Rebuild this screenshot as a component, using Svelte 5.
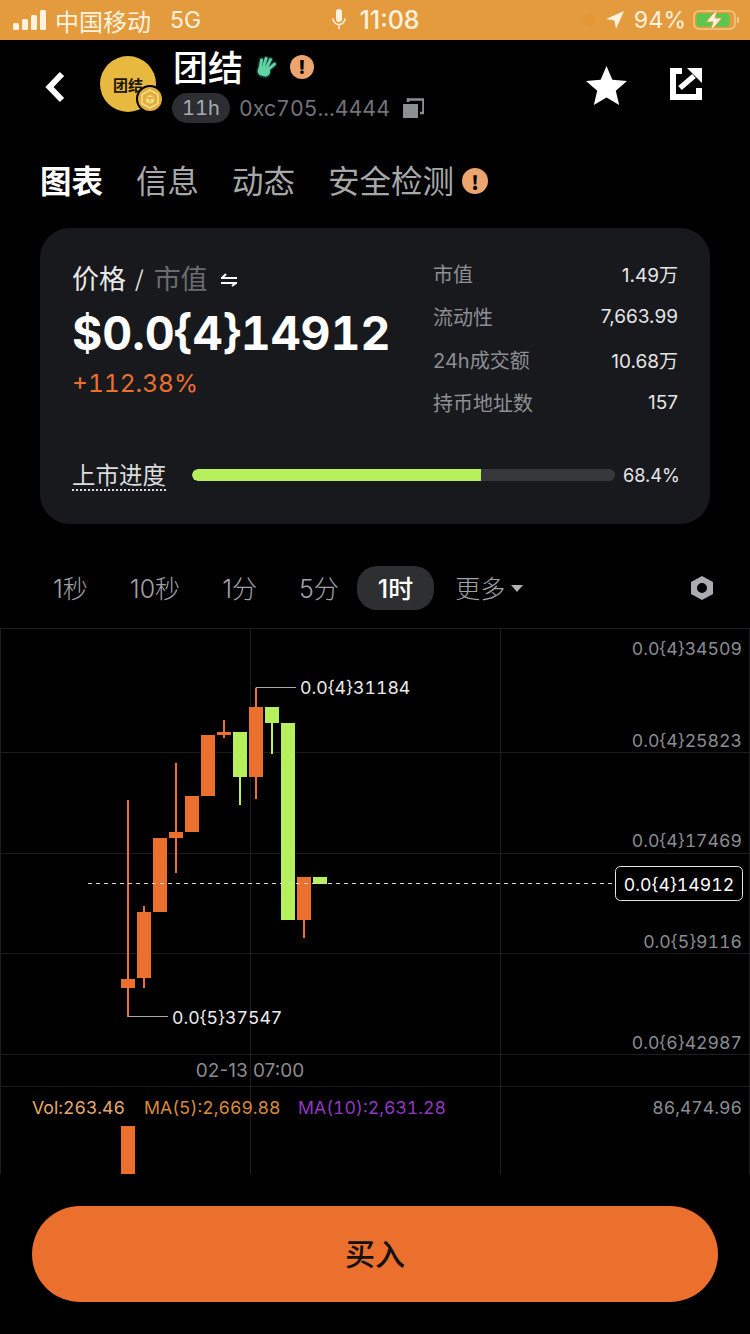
<script>
  const tabs = ['图表', '信息', '动态', '安全检测'];
  const stats = [['市值', '1.49万'], ['流动性', '7,663.99'], ['24h成交额', '10.68万'], ['持币地址数', '157']];
  const frames = ['1秒', '10秒', '1分', '5分', '1时'];
  const OR = '#eb702e';
  const GR = '#b6f05c';
  const candles = [
    { x: 121, t: 979, b: 988, w1: 800, w2: 1017, c: OR },
    { x: 137, t: 912, b: 978, w1: 906, w2: 988, c: OR },
    { x: 153, t: 838, b: 912, w1: 838, w2: 912, c: OR },
    { x: 169, t: 832, b: 838, w1: 763, w2: 873, c: OR },
    { x: 185, t: 796, b: 832, w1: 796, w2: 832, c: OR },
    { x: 201, t: 735, b: 796, w1: 735, w2: 796, c: OR },
    { x: 217, t: 732, b: 735, w1: 720, w2: 738, c: OR },
    { x: 233, t: 732, b: 777, w1: 732, w2: 805, c: GR },
    { x: 249, t: 707, b: 777, w1: 688, w2: 799, c: OR },
    { x: 265, t: 707, b: 723, w1: 707, w2: 754, c: GR },
    { x: 281, t: 723, b: 920, w1: 723, w2: 920, c: GR },
    { x: 297, t: 877, b: 920, w1: 877, w2: 938, c: OR },
    { x: 313, t: 877, b: 884, w1: 877, w2: 884, c: GR }
  ];
  const axis = [
    ['0.0{4}34509', 655], ['0.0{4}25823', 747], ['0.0{4}17469', 847], ['0.0{5}9116', 948], ['0.0{6}42987', 1049]
  ];
  const origin = 628;
</script>

<div class="page">
  <div class="status">
    <div class="st-left">
      <svg class="signal" width="34" height="20" viewBox="0 0 34 20"><rect x="0" y="13" width="6" height="7" rx="1.5"/><rect x="9" y="9" width="6" height="11" rx="1.5"/><rect x="18" y="5" width="6" height="15" rx="1.5"/><rect x="27" y="0" width="6" height="20" rx="1.5"/></svg>
      <span class="carrier">中国移动</span>
      <span class="net">5G</span>
    </div>
    <div class="st-mid">
      <svg width="14" height="22" viewBox="0 0 14 22"><rect x="4" y="0" width="6" height="13" rx="3" fill="#fff3df"/><path d="M1 9.500a6 6 0 0 0 12 0M7 16v4" fill="none" stroke="#fff3df" stroke-width="1.600"/></svg>
      <span class="time">11:08</span>
    </div>
    <div class="st-right">
      <span class="dot"></span>
      <svg width="18" height="18" viewBox="0 0 18 18"><path d="M18 0 0 8l8.500 1.500L10 18z" fill="#fff3df"/></svg>
      <span class="pct">94%</span>
      <svg width="46" height="24" viewBox="0 0 46 24">
        <rect x="1" y="3" width="41" height="18" rx="5" fill="none" stroke="#f3c98c" stroke-width="1.500"/>
        <rect x="3.500" y="5.500" width="33" height="13" rx="2.500" fill="#57c84d"/>
        <rect x="44" y="9" width="2" height="6" rx="1" fill="#f3c98c"/>
        <path d="M25 0 13 14h7l-3 10 12-14h-7z" fill="#fff3df" stroke="#e39b3e" stroke-width="1"/>
      </svg>
    </div>
  </div>

  <header class="head">
    <svg class="back" width="24" height="32" viewBox="0 0 24 32"><path d="M18 3 5.500 16 18 29" fill="none" stroke="#fff" stroke-width="6"/></svg>
    <div class="avatar">
      <span class="av-text">团结</span>
      <span class="av-badge">
        <svg width="22" height="22" viewBox="0 0 22 22"><path d="M11 2 19 6.500V15.500L11 20 3 15.500V6.500Z" fill="none" stroke="#f6dc8a" stroke-width="1.600"/><path d="M11 6.500l4.500 2.500v5L11 16.500 6.500 14V9ZM6.500 9 11 11.500 15.500 9M11 11.500v5" fill="#f6dc8a" stroke="#e0ae3a" stroke-width=".8"/></svg>
      </span>
    </div>
    <div class="title-col">
      <div class="title-row">
        <span class="title">团结</span>
        <svg class="hand" width="22" height="24" viewBox="0 0 22 24">
          <g transform="rotate(14 10 14)">
            <g stroke="#16352f" stroke-width="5.500" stroke-linecap="round" fill="none">
              <path d="M5 14 4.500 6M8 13 8.500 3.500M11 13 13 3.500M13 14 18 7"/>
              <path d="M8 17l3 0" stroke-width="12"/>
            </g>
            <g stroke="#5fd3a3" stroke-width="3" stroke-linecap="round" fill="none">
              <path d="M5 14 4.500 6M8 13 8.500 3.500M11 13 13 3.500M13 14 18 7"/>
              <path d="M8 16.500l3 0" stroke-width="9.500"/>
            </g>
          </g>
        </svg>
        <span class="warn big">!</span>
      </div>
      <div class="sub-row">
        <span class="age">11h</span>
        <span class="addr">0xc705...4444</span>
        <svg width="22" height="20" viewBox="0 0 22 20"><rect x="1" y="6" width="15" height="14" fill="#8c8f93"/><path d="M6 3V0.500h15.500V14H18" fill="none" stroke="#8c8f93" stroke-width="2.600" transform="translate(0 1)"/></svg>
      </div>
    </div>
    <div class="actions">
      <svg width="43" height="41" viewBox="0 0 44 42"><path d="M22 1l6 14 15 1.300-11.500 10L35 41 22 33.300 9 41l3.500-14.700L1 16.300 16 15z" fill="#fff"/></svg>
      <svg class="share" width="32" height="32" viewBox="0 0 32 32"><path d="M12 3H3v26h26v-9" fill="none" stroke="#fff" stroke-width="6"/><path d="M10 20 24 8" stroke="#fff" stroke-width="5.500" fill="none"/><path d="M17 0h15v15z" fill="#fff"/></svg>
    </div>
  </header>

  <nav class="tabs">
    {#each tabs as t, i}
      <span class="tab" class:on={i === 0}>{t}</span>
    {/each}
    <span class="warn tabwarn">!</span>
  </nav>

  <section class="card">
    <div class="card-top">
      <div class="price-col">
        <div class="switch">
          <span>价格</span><span class="slash">/</span><span class="dim">市值</span>
          <svg width="18" height="14" viewBox="0 0 18 14"><path d="M1 5h16M6 1 2 5M1 10h16M12 13l4-3" fill="none" stroke="#fff" stroke-width="2"/></svg>
        </div>
        <div class="price">$0.0&#123;4&#125;14912</div>
        <div class="change">+112.38%</div>
      </div>
      <dl class="stats">
        {#each stats as s}
          <div class="stat"><dt>{s[0]}</dt><dd>{s[1]}</dd></div>
        {/each}
      </dl>
    </div>
    <div class="progress">
      <span class="plabel">上市进度</span>
      <div class="track"><div class="fill" style="width:{68.4}%"></div></div>
      <span class="pval">68.4%</span>
    </div>
  </section>

  <div class="frames">
    {#each frames as f, i}
      <span class="frame" class:act={i === 4}>{f}</span>
    {/each}
    <span class="more">更多<i class="caret"></i></span>
    <svg class="gear" width="24" height="26" viewBox="0 0 24 26"><path fill-rule="evenodd" d="M12 1 23 7v12l-11 6L1 19V7zM12 8a5 5 0 1 0 0 10 5 5 0 0 0 0-10z" fill="#a9adb1"/></svg>
  </div>

  <svg class="chart" width="750" height="546" viewBox="0 {origin} 750 546">
    <g stroke="#1c1d1f" stroke-width="1">
      <path d="M0 628.500H750M0 752.500H750M0 853.500H750M0 953.500H750M0 1054.500H750M0 1086.500H750"/>
      <path d="M.5 628V1174M250.500 628V1174M500.500 628V1174M749.500 628V1174"/>
    </g>
    {#each candles as k}
      <rect x={k.x + 6} y={k.w1} width="2" height={k.w2 - k.w1} fill={k.c}/>
      <rect x={k.x} y={k.t} width="14" height={k.b - k.t} fill={k.c}/>
    {/each}
    <path d="M88 883.500H612" stroke="#d8d8d8" stroke-width="1" stroke-dasharray="4 4"/>
    <path d="M256 688V687.500H296M128 1016.500H168" stroke="#a8a8a8" stroke-width="1" fill="none"/>
    <text class="mark" x="300" y="694">0.0&#123;4&#125;31184</text>
    <text class="mark" x="172" y="1024">0.0&#123;5&#125;37547</text>
    {#each axis as a}
      <text class="axis" x="742" y={a[1]} text-anchor="end">{a[0]}</text>
    {/each}
    <rect x="615.500" y="866.500" width="127" height="34" rx="5" fill="#000" stroke="#e6e6e6"/>
    <text class="cur" x="679" y="891" text-anchor="middle">0.0&#123;4&#125;14912</text>
    <text class="date" x="250" y="1077" text-anchor="middle">02-13 07:00</text>
    <text class="vol" x="32" y="1114" fill="#e2aa72">Vol:263.46</text>
    <text class="vol" x="144" y="1114" fill="#d98a3d">MA(5):2,669.88</text>
    <text class="vol" x="298" y="1114" fill="#9237c4">MA(10):2,631.28</text>
    <text class="axis" x="742" y="1114" text-anchor="end">86,474.96</text>
    <rect x="121" y="1126" width="14" height="48" fill={OR}/>
  </svg>

  <button class="buy">买入</button>
</div>

<style>
  :global(body) { margin: 0; background: #000; }
  .page {
    width: 750px; height: 1334px; background: #000; overflow: hidden; color: #fff;
    display: flex; flex-direction: column;
    font-family: Inter, "Noto Sans CJK SC", sans-serif;
  }
  .status {
    height: 40px; flex: none; background: #e39b3e; color: #fff3df;
    display: grid; grid-template-columns: 1fr auto 1fr; align-items: center; padding: 0 11px 0 13px;
    font-family: "Noto Sans CJK SC", sans-serif; font-size: 24px;
  }
  .st-left { display: flex; align-items: center; }
  .signal { fill: #fff3df; margin-right: 8px; }
  .net { margin-left: 19px; font-family: Inter, sans-serif; font-size: 23px; }
  .st-mid { display: flex; align-items: center; gap: 13px; }
  .time { font-family: Inter, sans-serif; font-size: 25px; font-weight: 500; }
  .st-right { display: flex; align-items: center; justify-content: flex-end; gap: 7px; }
  .dot { width: 12px; height: 12px; border-radius: 50%; background: #e59633; margin-right: 4px; }
  .pct { font-family: Inter, sans-serif; font-size: 23px; margin-left: 3px; font-variant-numeric: tabular-nums; }

  .head { height: 94px; flex: none; display: flex; padding-left: 44px; padding-right: 48px; }
  .back { margin-top: 31px; }
  .avatar {
    width: 56px; height: 56px; border-radius: 50%; background: #e8b93f; margin: 16px 0 0 32px;
    position: relative; display: flex; align-items: center; justify-content: center; flex: none;
  }
  .av-text { color: #1c1608; font-size: 15px; font-weight: 700; font-family: "Noto Sans CJK SC", sans-serif; }
  .av-badge {
    position: absolute; right: -8px; bottom: -1px; width: 24px; height: 24px; border-radius: 50%;
    background: #e0ae3a; border: 2px solid #000; display: flex; align-items: center; justify-content: center;
  }
  .title-col { margin-left: 17px; display: flex; flex-direction: column; }
  .title-row { display: flex; align-items: center; height: 56px; margin-top: -2px; margin-bottom: 2px; }
  .title { font-family: "Noto Sans CJK SC", sans-serif; font-size: 35px; line-height: 50px; font-weight: 500; width: 70px; }
  .hand { margin-left: 12px; margin-top: 2px; }
  .warn {
    width: 24px; height: 24px; border-radius: 50%; background: #eda56f; color: #000; font-weight: 800;
    font-size: 19px; display: inline-flex; align-items: center; justify-content: center; line-height: 1;
  }
  .big { margin-left: 13px; margin-top: 2px; }
  .sub-row { display: flex; align-items: center; margin-top: -3px; margin-left: -1px; }
  .age {
    background: #2c2e31; color: #a8abae; font-size: 20px; height: 30px; width: 58px; border-radius: 15px;
    display: flex; align-items: center; justify-content: center; font-variant-numeric: tabular-nums;
  }
  .addr { color: #717478; font-size: 21.300px; margin-left: 9px; margin-right: 12px; font-variant-numeric: tabular-nums; }
  .actions { margin-left: auto; display: flex; align-items: flex-start; gap: 42px; padding-top: 25px; }
  .share { margin-top: 3px; }

  .tabs { height: 92px; margin-bottom: 2px; flex: none; display: flex; align-items: center; padding: 0 0 2px 40px; box-sizing: border-box; gap: 33px; font-family: "Noto Sans CJK SC", sans-serif; }
  .tab { font-size: 31.500px; color: #a6a8aa; line-height: 44px; }
  .tab.on { color: #fff; font-weight: 700; }
  .tabwarn { margin-left: -25px; width: 26px; height: 26px; margin-top: 4px; }

  .card {
    flex: none; margin: 0 40px; height: 296px; box-sizing: border-box; border-radius: 30px; background: #18191c;
    padding: 29px 32px 0 33px; display: flex; flex-direction: column;
  }
  .card-top { display: flex; justify-content: space-between; height: 190px; }
  .switch { display: flex; align-items: center; font-family: "Noto Sans CJK SC", sans-serif; font-size: 27px; height: 40px; color: #e8e8e8; margin-left: -1px; }
  .slash { font-size: 22px; margin: 0 10px 0 9px; }
  .dim { color: #6a6c70; margin-right: 12px; }
  .switch svg { margin-top: 6px; }
  .price { font-size: 46.300px; font-weight: 700; line-height: 56px; margin-top: 8px; white-space: nowrap; font-variant-numeric: tabular-nums; margin-left: -1px; }
  .change { color: #eb702e; font-size: 24.500px; line-height: 30px; margin-top: 7px; font-variant-numeric: tabular-nums; margin-left: -1px; }
  .stats { margin: -5px 0 0; width: 245px; display: flex; flex-direction: column; }
  .stat { display: flex; justify-content: space-between; align-items: center; height: 43px; font-size: 19px; }
  dt { color: #8c8f93; font-size: 20px; }
  dd { margin: 0; color: #e4e5e6; }
  .progress { display: flex; align-items: center; height: 34px; margin-top: 11px; }
  .plabel { font-family: "Noto Sans CJK SC", sans-serif; font-size: 23.500px; color: #dcdcdc; border-bottom: 2px dotted #dcdcdc; line-height: 29px; width: 94px; white-space: nowrap; flex: none; margin-left: -1px; }
  .track { width: 423px; flex: none; height: 12px; border-radius: 6px; background: #37383b; margin-left: 26px; overflow: hidden; }
  .fill { height: 100%; background: #b6f05c; border-radius: 6px 0 0 6px; }
  .pval { font-size: 18.200px; color: #e4e5e6; margin-left: 8px; white-space: nowrap; }

  .frames { height: 104px; box-sizing: border-box; padding: 24px 0 0 32px; flex: none; display: flex; align-items: center; font-size: 25px; font-weight: 300; color: #a0a3a6; }
  .frame { height: 44px; box-sizing: border-box; padding: 0 21px 3px; display: flex; align-items: center; justify-content: center; border-radius: 20px; }
  .frame.act { background: #2d2f31; color: #fff; font-weight: 500; margin-left: -3px; }
  .more { display: flex; align-items: center; margin-left: 21px; padding-bottom: 3px; }
  .caret { width: 0; height: 0; border: 6px solid transparent; border-top: 7px solid #b0b3b6; border-bottom: 0; margin-left: 6px; margin-top: 3px; }
  .gear { margin-left: auto; margin-right: 36px; }

  .chart { display: block; flex: none; }
  text { font-family: Inter, sans-serif; }
  .axis, .mark, .cur, .vol { font-size: 17.700px; font-variant-numeric: tabular-nums; }
  .axis { fill: #8a8d90; }
  .mark { fill: #ececec; }
  .cur { fill: #fff; }
  .date { font-size: 19px; fill: #8a8d90; }

  .buy {
    flex: none; margin: 32px 32px 0; height: 96px; border: 0; border-radius: 48px; background: #eb702e; color: #111;
    font-family: "Noto Sans CJK SC", sans-serif; font-size: 30px; font-weight: 500; padding: 0 0 4px;
  }
</style>
